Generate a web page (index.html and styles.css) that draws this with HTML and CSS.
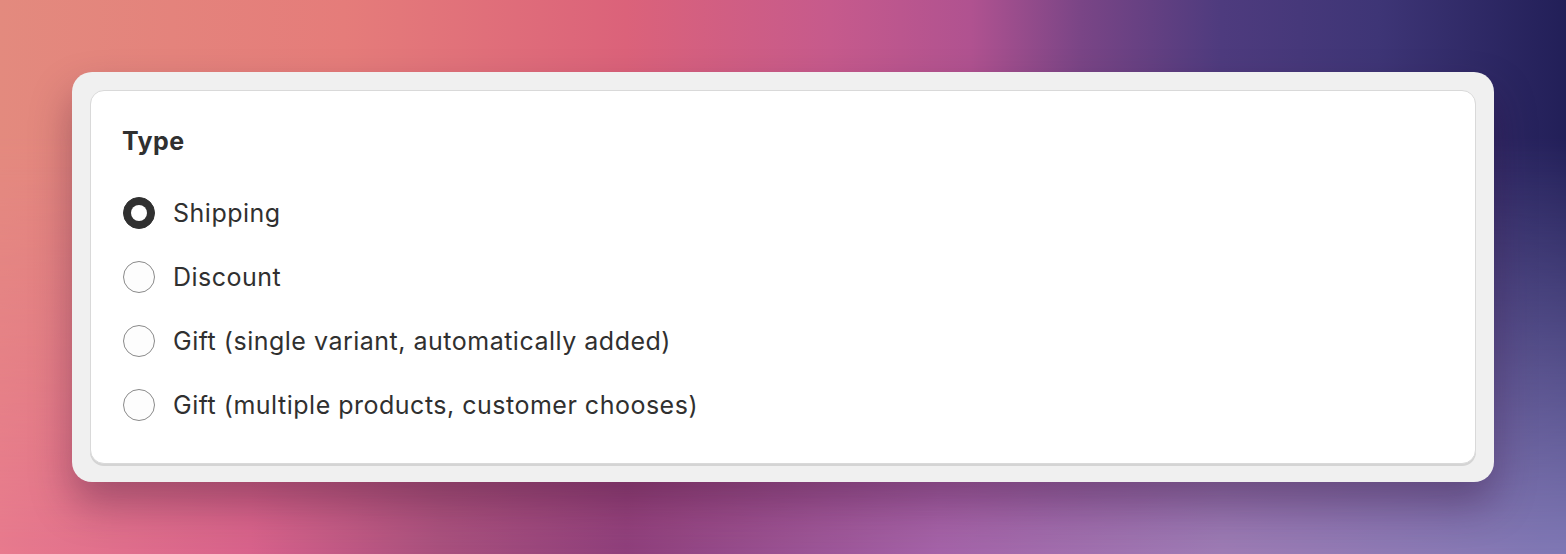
FILE: index.html
```html
<!DOCTYPE html>
<html lang="en">
<head>
<meta charset="utf-8">
<title>Type</title>
<link rel="stylesheet" href="styles.css">
</head>
<body>
<div class="frame">
  <div class="card">
    <h2 class="title">Type</h2>
    <div class="options">
      <label class="option"><span class="radio checked"></span><span class="label">Shipping</span></label>
      <label class="option"><span class="radio"></span><span class="label">Discount</span></label>
      <label class="option"><span class="radio"></span><span class="label">Gift (single variant, automatically added)</span></label>
      <label class="option"><span class="radio"></span><span class="label">Gift (multiple products, customer chooses)</span></label>
    </div>
  </div>
</div>
</body>
</html>
```

FILE: styles.css
```css
html, body {
  margin: 0;
  height: 100%;
}
body {
  position: relative;
  padding: 72px;
  box-sizing: border-box;
  font-family: Inter, "Noto Sans", sans-serif;
  color: #303030;
  background: linear-gradient(to right, #e87a8e 0%, #d8628c 16%, #a8507e 28%, #8e3f7c 40%, #a463a8 60%, #9e7cb5 78%, #7f78b5 100%);
  overflow: hidden;
}
body::before {
  content: "";
  position: absolute;
  inset: 0;
  z-index: -1;
  background: linear-gradient(to right, #e38a7e 0%, #e57c7a 22%, #db627a 40%, #c65a8c 53%, #b05290 62%, #7a4586 69%, #4e3b7e 78%, #3e3576 88%, #221f58 100%);
  -webkit-mask-image: linear-gradient(to bottom, #000 0%, #000 25%, transparent 100%);
  mask-image: linear-gradient(to bottom, #000 0%, #000 25%, transparent 100%);
}
.frame {
  background: #f0f0f0;
  border-radius: 20px;
  padding: 18px;
  box-shadow: 0 22px 40px rgba(50, 10, 50, 0.35);
}
.card {
  background: #ffffff;
  border: 1px solid #d9d9d9;
  border-radius: 14px;
  box-shadow: 0 2px 0 #d4d4d4;
  padding: 34px 31px 34px 32px;
}
.title {
  margin: 0 0 32px;
  font-size: 25px;
  line-height: 32px;
  font-weight: 700;
  letter-spacing: 0.4px;
  color: #303030;
  margin-left: -1px;
}
.options {
  display: flex;
  flex-direction: column;
  gap: 16px;
}
.option {
  display: flex;
  align-items: center;
  gap: 18px;
  height: 48px;
}
.radio {
  width: 32px;
  height: 32px;
  box-sizing: border-box;
  border-radius: 50%;
  border: 1px solid #8a8a8a;
  background: #fdfdfd;
  flex: none;
  display: flex;
  align-items: center;
  justify-content: center;
}
.radio.checked {
  background: #303030;
  border-color: #303030;
}
.radio.checked::after {
  content: "";
  width: 16px;
  height: 16px;
  border-radius: 50%;
  background: #ffffff;
}
.label {
  font-size: 25px;
  line-height: 32px;
  letter-spacing: 0.5px;
  color: #303030;
}
```
